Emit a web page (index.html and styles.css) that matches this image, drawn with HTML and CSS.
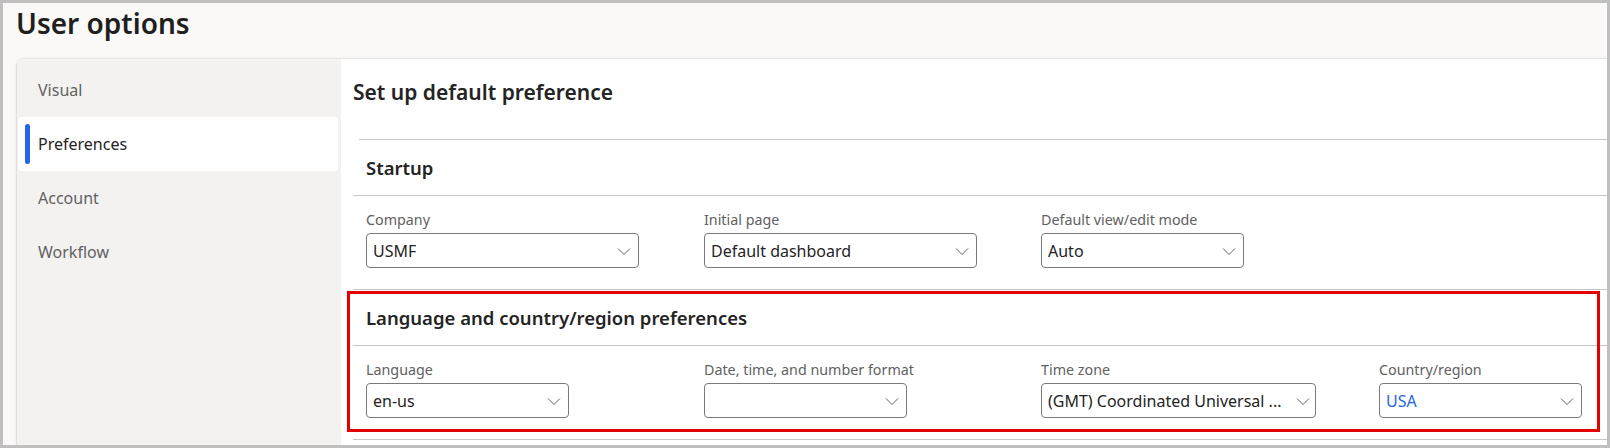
FILE: index.html
```html
<!DOCTYPE html>
<html lang="en">
<head>
<meta charset="utf-8">
<title>User options</title>
<link rel="stylesheet" href="styles.css">
</head>
<body>
<div class="frame">
  <header class="page-header">
    <h1 class="page-title">User options</h1>
  </header>
  <div class="panel">
    <nav class="side">
      <a class="nav-item">Visual</a>
      <a class="nav-item active">Preferences</a>
      <a class="nav-item">Account</a>
      <a class="nav-item">Workflow</a>
    </nav>
    <main class="content">
      <h2 class="content-title">Set up default preference</h2>
      <div class="rule-top"></div>

      <section class="group">
        <div class="group-head">Startup</div>
        <div class="fields">
          <div class="field">
            <label class="field-label">Company</label>
            <div class="select w-wide"><span class="select-value">USMF</span><svg class="chev" viewBox="0 0 16 16"><path d="M2 5.5 L8 11.5 L14 5.5"/></svg></div>
          </div>
          <div class="field">
            <label class="field-label">Initial page</label>
            <div class="select w-wide"><span class="select-value">Default dashboard</span><svg class="chev" viewBox="0 0 16 16"><path d="M2 5.5 L8 11.5 L14 5.5"/></svg></div>
          </div>
          <div class="field">
            <label class="field-label">Default view/edit mode</label>
            <div class="select w-std"><span class="select-value">Auto</span><svg class="chev" viewBox="0 0 16 16"><path d="M2 5.5 L8 11.5 L14 5.5"/></svg></div>
          </div>
        </div>
      </section>

      <section class="group group-callout">
        <div class="group-head">Language and country/region preferences</div>
        <div class="fields">
          <div class="field">
            <label class="field-label">Language</label>
            <div class="select w-std"><span class="select-value">en-us</span><svg class="chev" viewBox="0 0 16 16"><path d="M2 5.5 L8 11.5 L14 5.5"/></svg></div>
          </div>
          <div class="field">
            <label class="field-label">Date, time, and number format</label>
            <div class="select w-std"><span class="select-value"></span><svg class="chev" viewBox="0 0 16 16"><path d="M2 5.5 L8 11.5 L14 5.5"/></svg></div>
          </div>
          <div class="field">
            <label class="field-label">Time zone</label>
            <div class="select w-tz"><span class="select-value">(GMT) Coordinated Universal ...</span><svg class="chev tight" viewBox="0 0 16 16"><path d="M2 5.5 L8 11.5 L14 5.5"/></svg></div>
          </div>
          <div class="field">
            <label class="field-label">Country/region</label>
            <div class="select w-std"><span class="select-value link">USA</span><svg class="chev" viewBox="0 0 16 16"><path d="M2 5.5 L8 11.5 L14 5.5"/></svg></div>
          </div>
        </div>
        <div class="callout"></div>
      </section>
    </main>
  </div>
</div>
</body>
</html>
```

FILE: styles.css
```css
* { box-sizing: border-box; }
html, body { margin: 0; padding: 0; }
body {
  font-family: "Noto Sans", "Open Sans", sans-serif;
  color: #242424;
  background: #ffffff;
}

.frame {
  width: 1610px;
  height: 448px;
  border: 3px solid #bfbfbf;
  background: #faf9f8;
  display: flex;
  flex-direction: column;
  overflow: hidden;
}

.page-header {
  height: 55px;
  flex: none;
  padding: 2px 0 0 13px;
}
.page-title {
  margin: 0;
  font-size: 28px;
  line-height: 36px;
  font-weight: 600;
  color: #201f1e;
}

.panel {
  flex: 1;
  display: flex;
  margin-left: 13px;
  border-top: 1px solid #e8e6e4;
  border-top-left-radius: 8px;
  overflow: hidden;
  box-shadow: 0 0 2px rgba(0, 0, 0, 0.08);
}

.side {
  width: 325px;
  flex: none;
  background: #f3f2f1;
  border-left: 1px solid #e1dfdd;
  padding-top: 4px;
  display: flex;
  flex-direction: column;
}
.nav-item {
  position: relative;
  height: 54px;
  display: flex;
  align-items: center;
  padding-left: 20px;
  margin: 0 3px 0 1px;
  border-radius: 4px;
  font-size: 16px;
  color: #616161;
}
.nav-item.active {
  background: #ffffff;
  color: #242424;
}
.nav-item.active::before {
  content: "";
  position: absolute;
  left: 7px;
  top: 7px;
  bottom: 7px;
  width: 5px;
  border-radius: 3px;
  background: #2564e6;
}

.content {
  flex: 1;
  background: #ffffff;
  padding: 19px 0 0 12px;
}
.content-title {
  margin: 0 0 33px 0;
  font-size: 21px;
  line-height: 28px;
  font-weight: 600;
  color: #242424;
}
.rule-top {
  height: 1px;
  margin-left: 6px;
  background: #c6c6c6;
}

.group { position: relative; }
.group-head {
  height: 56px;
  display: flex;
  align-items: center;
  padding-left: 13px;
  border-bottom: 1px solid #c6c6c6;
  font-size: 18.5px;
  font-weight: 600;
  color: #242424;
}
.fields {
  display: grid;
  grid-template-columns: 338px 337px 338px 1fr;
  padding: 14px 0 21px 13px;
  border-bottom: 1px solid #c6c6c6;
}
.field {
  display: flex;
  flex-direction: column;
  align-items: flex-start;
}
.field-label {
  font-size: 14.3px;
  line-height: 20px;
  color: #616161;
  margin-bottom: 3px;
}
.select {
  height: 35px;
  display: flex;
  align-items: center;
  justify-content: space-between;
  padding: 0 6px 0 6px;
  border: 1px solid #7a7a7a;
  border-radius: 4px;
  font-size: 16px;
  color: #242424;
  background: #ffffff;
}
.w-wide { width: 273px; }
.w-std { width: 203px; }
.w-tz { width: 275px; padding-right: 4px; }
.select-value { white-space: nowrap; overflow: hidden; }
.select-value.link { color: #2266e3; }
.chev {
  width: 16px;
  height: 16px;
  flex: none;
  fill: none;
  stroke: #616161;
  stroke-width: 1;
}

.callout {
  position: absolute;
  left: -6px;
  top: 1px;
  right: 7px;
  bottom: 8px;
  border: 3px solid #e30000;
  pointer-events: none;
}
```
